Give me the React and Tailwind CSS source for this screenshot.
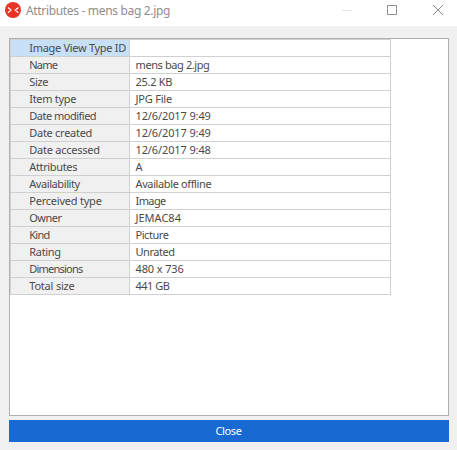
const rows = [
  ["Image View Type ID", "tracking-[-0.3px]", "", ""],
  ["Name", "tracking-[-0.8px]", "mens bag 2.jpg", "tracking-[-0.4px]"],
  ["Size", "tracking-[-0.35px]", "25.2 KB", "tracking-[-0.3px]"],
  ["Item type", "tracking-[-0.3px]", "JPG File", "tracking-[-0.2px]"],
  ["Date modified", "tracking-[-0.5px]", "12/6/2017 9:49", "tracking-[-0.12px]"],
  ["Date created", "tracking-[-0.28px]", "12/6/2017 9:49", "tracking-[-0.12px]"],
  ["Date accessed", "tracking-[-0.25px]", "12/6/2017 9:48", "tracking-[-0.12px]"],
  ["Attributes", "tracking-[-0.35px]", "A", ""],
  ["Availability", "tracking-[-0.42px]", "Available offline", "tracking-[-0.38px]"],
  ["Perceived type", "tracking-[-0.22px]", "Image", "tracking-[-0.6px]"],
  ["Owner", "tracking-[-0.5px]", "JEMAC84", ""],
  ["Kind", "tracking-[-0.7px]", "Picture", "tracking-[-0.45px]"],
  ["Rating", "tracking-[-0.3px]", "Unrated", "tracking-[-0.45px]"],
  ["Dimensions", "tracking-[-0.78px]", "480 x 736", "tracking-[-0.12px]"],
  ["Total size", "tracking-[-0.2px]", "441 GB", "tracking-[-0.5px]"],
];

function TitleBar() {
  return (
    <header className="flex h-[26px] items-start bg-white">
      <svg className="ml-[5px] mt-[2px] size-4" viewBox="0 0 16 16" fill="none">
        <circle cx="8" cy="8" r="8" fill="#ea3323" />
        <path d="M2.9 5.5 6 8.1 2.9 10.7M13.4 5.5l-3.1 2.6 3.1 2.6" stroke="#fff" strokeWidth="1.2" />
      </svg>
      <h1 className="ml-[5px] mt-[3px] whitespace-nowrap text-[12px] leading-4 tracking-[-0.33px] text-[#8e8e8e]">
        Attributes - mens bag 2.jpg
      </h1>
      <svg className="ml-auto mr-[14px] mt-[4px] h-3 w-[101px] shrink-0" viewBox="0 0 101 12" fill="none">
        <path d="M0 6.5h10" stroke="#e6e6e6" />
        <path d="M45.5 1.5h9v9h-9z" stroke="#8e8e8e" />
        <path d="M91 1l10 10M101 1 91 11" stroke="#8e8e8e" />
      </svg>
    </header>
  );
}

export default function App() {
  return (
    <div className="flex h-[450px] w-[457px] flex-col overflow-hidden bg-[#f0f0f0] font-['Noto_Sans','Open_Sans',sans-serif]">
      <TitleBar />
      <main className="ml-[9px] mr-2 mt-3 h-[378px] border border-[#b0b0b0] bg-white text-[11px] leading-4 text-[#4a4a4a]">
        <div className="w-[381px] border-l border-t border-[#d0d0d0]">
          {rows.map(([label, labelTracking, value, valueTracking], i) => (
            <div key={label} className="flex h-[17px] whitespace-nowrap">
              <div
                className={`w-[119px] border-b border-r border-[#d0d0d0] pl-[18.25px] ${
                  i === 0 ? "bg-[#c7dff7]" : "bg-[#f0f0f0]"
                }`}
              >
                <span className={labelTracking}>{label}</span>
              </div>
              <div className="flex-1 border-b border-r border-[#d0d0d0] pl-[5.5px]">
                <span className={valueTracking}>{value}</span>
              </div>
            </div>
          ))}
        </div>
      </main>
      <button className="ml-[9px] mr-2 mt-1 h-[22px] bg-[#186ad3] pr-px text-[11px] leading-[22px] tracking-[-0.4px] text-white">
        Close
      </button>
    </div>
  );
}
